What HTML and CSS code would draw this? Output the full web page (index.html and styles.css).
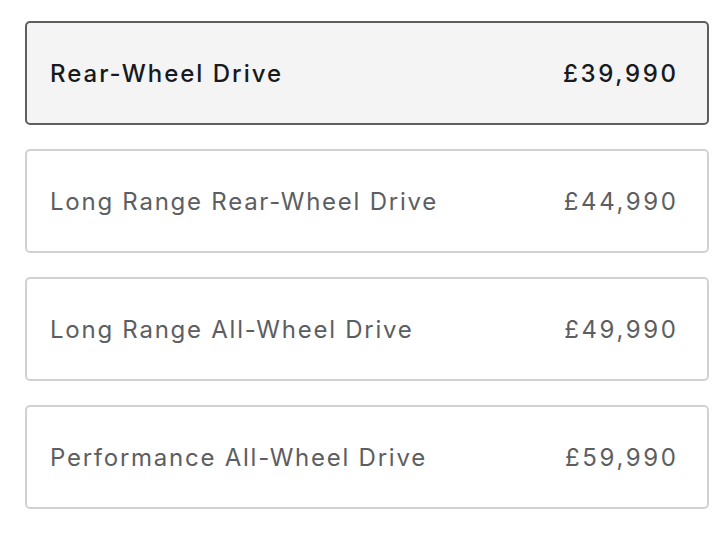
FILE: index.html
```html
<!DOCTYPE html>
<html lang="en">

<head>
    <meta charset="UTF-8">
    <meta name="viewport" content="width=device-width, initial-scale=1.0">
    <title>Trims</title>
    <link rel="stylesheet" href="styles.css">
</head>

<body>
    <div class="trim-list">
        <label class="trim selected">
            <span class="trim-name">Rear-Wheel Drive</span>
            <span class="trim-price">£39,990</span>
        </label>
        <label class="trim">
            <span class="trim-name">Long Range Rear-Wheel Drive</span>
            <span class="trim-price">£44,990</span>
        </label>
        <label class="trim">
            <span class="trim-name">Long Range All-Wheel Drive</span>
            <span class="trim-price">£49,990</span>
        </label>
        <label class="trim">
            <span class="trim-name">Performance All-Wheel Drive</span>
            <span class="trim-price">£59,990</span>
        </label>
    </div>
</body>

</html>
```

FILE: styles.css
```css
body {
    margin: 0;
    background: #fff;
    font-family: Inter, "Liberation Sans", sans-serif;
}

.trim-list {
    display: flex;
    flex-direction: column;
    gap: 24px;
    width: 684px;
    padding: 21px 0 0 25px;
}

.trim {
    display: flex;
    justify-content: space-between;
    align-items: center;
    box-sizing: border-box;
    height: 104px;
    padding: 0 31px 0 23px;
    border: 2px solid #d0d1d2;
    border-radius: 5px;
    color: #5c5e62;
    font-size: 24px;
    cursor: pointer;
}

.trim-name {
    letter-spacing: 1.75px;
}

.trim-price {
    letter-spacing: 2.6px;
    margin-right: -2.5px;
}

.trim.selected {
    border-color: #5c5e62;
    background: #f4f4f4;
    color: #171a20;
    font-weight: 500;
}

.trim.selected .trim-name {
    letter-spacing: 2px;
}
```
